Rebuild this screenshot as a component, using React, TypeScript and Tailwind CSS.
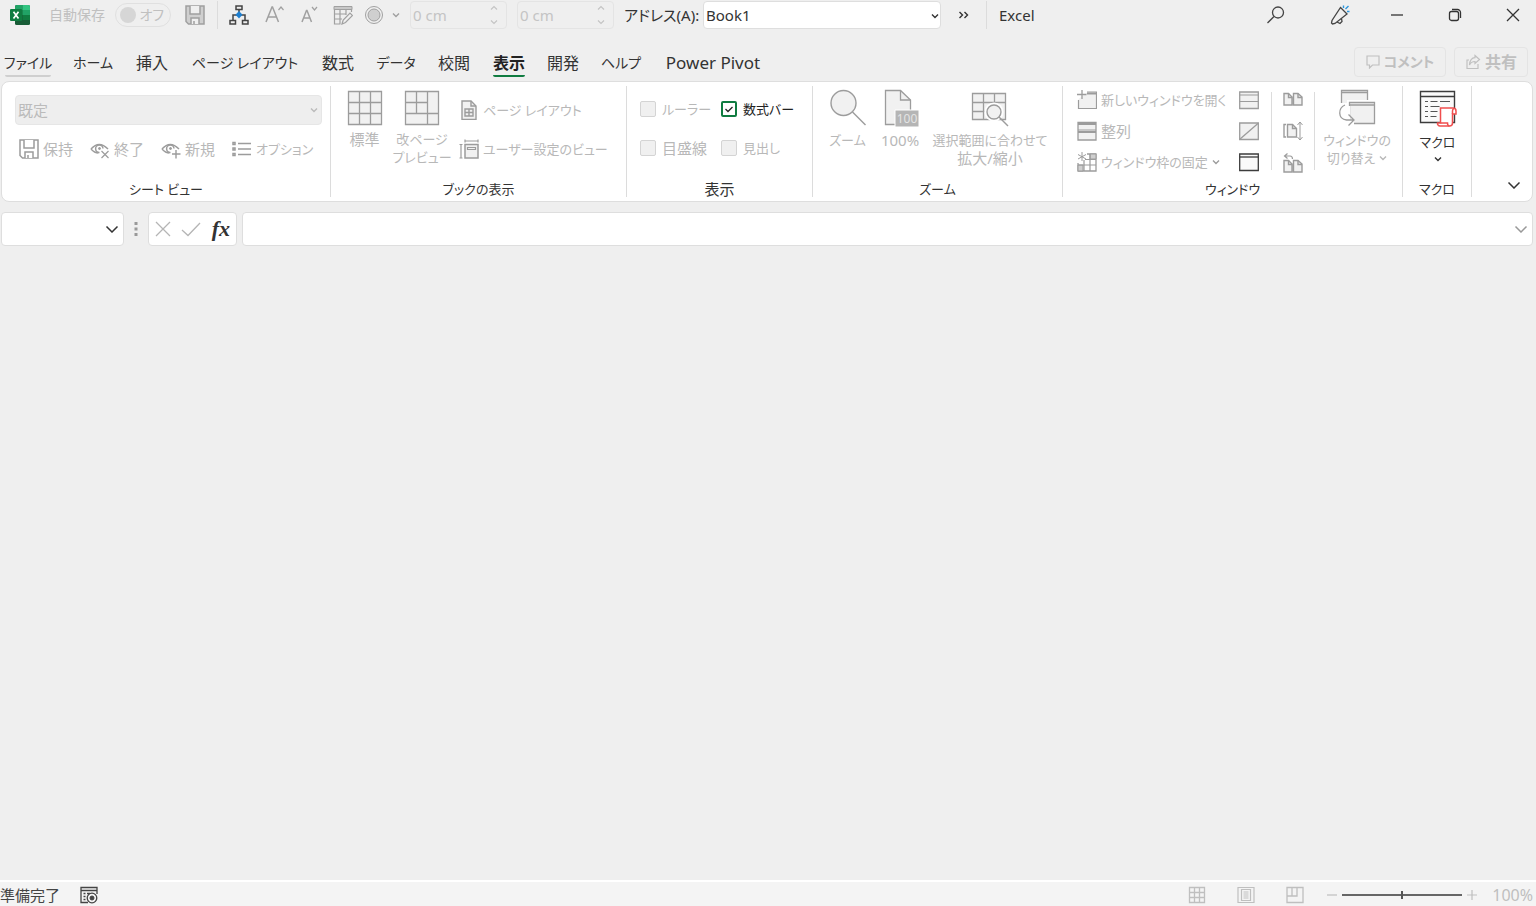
import { useState } from 'react';
import type { ReactNode } from 'react';
import clsx from 'clsx';

const TABS: { label: string; width: string }[] = [
  { label: 'ファイル', width: 'w-[46px]' },
  { label: 'ホーム', width: 'w-[40px]' },
  { label: '挿入', width: 'w-[34px]' },
  { label: 'ページ レイアウト', width: 'w-[108px]' },
  { label: '数式', width: 'w-[34px]' },
  { label: 'データ', width: 'w-[38px]' },
  { label: '校閲', width: 'w-[34px]' },
  { label: '表示', width: 'w-[32px]' },
  { label: '開発', width: 'w-[32px]' },
  { label: 'ヘルプ', width: 'w-[40px]' },
  { label: 'Power Pivot', width: 'w-[100px]' },
];

const hasKana = (label: string) => /[ぁ-ヶー]/.test(label);
const labelSize = (label: string) => (hasKana(label) ? 'text-[13px]' : 'text-[15px]');

function tabSize(label: string) {
  if (hasKana(label)) return 'text-sm';
  return label === 'Power Pivot' ? 'text-[17px]' : 'text-base';
}

// Icons

function Icon({ w = 20, h = 20, className, children }: { w?: number; h?: number; className?: string; children: ReactNode }) {
  return (
    <svg
      width={w}
      height={h}
      viewBox={`0 0 ${w} ${h}`}
      fill="none"
      stroke="currentColor"
      className={clsx('shrink-0', className)}
      aria-hidden="true"
    >
      {children}
    </svg>
  );
}

function Chevron({ className, large }: { className?: string; large?: boolean }) {
  return large ? (
    <Icon w={14} h={8} className={className}>
      <path d="M1.5 1.5 7 7l5.500-5.500" strokeWidth="1.5" />
    </Icon>
  ) : (
    <Icon w={8} h={6} className={className}>
      <path d="M1 1.500 4 4.500l3-3" strokeWidth="1.400" />
    </Icon>
  );
}

function ExcelLogo() {
  return (
    <Icon w={20} h={20}>
      <g stroke="none">
        <rect x="5" y="0" width="15" height="20" rx="1.500" fill="#185c37" />
        <path d="M5 1.500A1.500 1.500 0 0 1 6.500 0H12.500v5H5z" fill="#21a366" />
        <path d="M12.500 0h6A1.500 1.500 0 0 1 20 1.500V5h-7.500z" fill="#33c481" />
        <path d="M5 5h7.500v5H5z" fill="#107c41" />
        <path d="M12.500 5H20v5h-7.500z" fill="#21a366" />
        <path d="M12.500 10H20v5h-7.500z" fill="#107c41" />
        <rect x="0" y="4" width="12" height="12" rx="1" fill="#107c41" />
      </g>
      <path d="m3.500 6.800 5 6.600M8.500 6.800l-5 6.600" stroke="#fff" strokeWidth="1.700" />
    </Icon>
  );
}

function SaveIcon({ filled }: { filled?: boolean }) {
  return (
    <Icon>
      <path d="M1 1h18v18H3.500L1 16.500z" fill={filled ? '#cfcfcf' : 'none'} strokeWidth="1.500" />
      <path d="M5 1v8h10V1M6 19v-6h8v6M9 16v3" fill={filled ? '#efefef' : '#fff'} strokeWidth="1.500" />
    </Icon>
  );
}

function TreeIcon() {
  return (
    <Icon className="text-[#444]">
      <path d="M7 1h6v3.500H7zM1 15.500h5.500V19H1zM13.500 15.500H19V19h-5.500zM10 4.500V7M4 15.500V10h12v5.500" strokeWidth="1.500" />
      <path d="m10 6 3.500 3.700L10 13.400 6.500 9.700z" fill="#1e7fd0" stroke="none" />
    </Icon>
  );
}

function FontSizeIcon({ up }: { up?: boolean }) {
  return up ? (
    <Icon>
      <path d="M1 17 7 2h.500l6 15M3.200 12h8" strokeWidth="1.500" />
      <path d="m13.500 5 2.500-3 2.500 3" strokeWidth="1.200" />
    </Icon>
  ) : (
    <Icon>
      <path d="M3 17 7.500 5.500h.500L12.500 17M4.700 13h6" strokeWidth="1.500" />
      <path d="m13 2 2.500 3L18 2" strokeWidth="1.200" />
    </Icon>
  );
}

function TableEditIcon() {
  return (
    <Icon>
      <path d="M1 1.500h18v3H1z" fill="#c8c8c8" />
      <path d="M1.500 4v15h6M1.500 9H13M1.500 14H9M7 5v14M13 5v5M18.500 4v3" strokeWidth="1.200" />
      <path d="m9 19 1.200-4L17 8l2.500 2.500-7 7z" fill="#efefef" strokeWidth="1.200" />
    </Icon>
  );
}

function RecordIcon() {
  return (
    <Icon>
      <circle cx="10" cy="10" r="8.500" />
      <circle cx="10" cy="10" r="6" fill="#cfcfcf" />
    </Icon>
  );
}

function SearchIcon() {
  return (
    <Icon className="text-[#444]">
      <circle cx="12" cy="7.500" r="5.500" strokeWidth="1.300" />
      <path d="m8 11.500-6.500 6.500" strokeWidth="1.300" />
    </Icon>
  );
}

function MegaphoneIcon() {
  return (
    <Icon className="text-[#444]">
      <path d="M10.500 2.500 17 9 5 18.500l-2.500.500-1-1L2 15.500z" strokeWidth="1.300" />
      <path d="m7 17 3 1.500 2-2-.500-3" strokeWidth="1.300" />
      <path d="M13.500 3V.500M15.500 4l3-3M17 6.500h2.500" stroke="#2b96dd" strokeWidth="1.400" />
    </Icon>
  );
}

function EyeIcon({ mark }: { mark: 'x' | 'plus' }) {
  return (
    <Icon>
      <path d="M1 10q8-9 17 0M1 10q3.500 4 7.500 4" strokeWidth="1.500" />
      <path d="M13 9.500a3.700 3.700 0 1 0-3.500 4" strokeWidth="1.500" />
      <circle cx="9.500" cy="9.500" r="1" fill="currentColor" />
      {mark === 'x' ? (
        <path d="m11.500 12 7 7M18.500 12l-7 7" strokeWidth="1.200" />
      ) : (
        <path d="M15 11v8.500M11 15h8.500" strokeWidth="1.400" />
      )}
    </Icon>
  );
}

function ListIcon() {
  return (
    <Icon>
      <path d="M1 3.500h2v2H1zM1 9h2v2H1zM1 14.500h2v2H1z" strokeWidth="1.500" />
      <path d="M6 4.500h13M6 10h13M6 15.500h13" strokeWidth="1.400" />
    </Icon>
  );
}

function NormalViewIcon() {
  return (
    <Icon w={36} h={36}>
      <path d="M1.500 1.500h33v33h-33z" fill="#f1f1f1" strokeWidth="1.300" />
      <path d="M1.500 12.500h33M1.500 23.500h33M12.500 1.500v33M23.500 1.500v33" strokeWidth="1.300" />
    </Icon>
  );
}

function PageBreakIcon() {
  return (
    <Icon w={36} h={36}>
      <path d="M1.500 1.500h33v33h-33z" fill="#f1f1f1" strokeWidth="1.300" />
      <path d="M1.500 12.500h22M1.500 23.500h33M12.500 1.500v22M23.500 1.500v33" strokeWidth="1.300" />
    </Icon>
  );
}

function PageLayoutIcon() {
  return (
    <Icon>
      <path d="M3 1h9l5 5v13.500H3z" fill="#f1f1f1" strokeWidth="1.400" />
      <path d="M12 1v5h5M6 9h8v7H6zM10 9v7M6 12.500h8" strokeWidth="1.400" />
    </Icon>
  );
}

function CustomViewIcon() {
  return (
    <Icon>
      <path d="M6 5.500h13v13.500H6z" fill="#f1f1f1" strokeWidth="1.500" />
      <path d="M8.500 8.500h8v2h-8zM6 2h13M6 .500v3M19 .500v3M2 5.500V19M.500 5.500h3M.500 19h3" strokeWidth="1.200" />
    </Icon>
  );
}

function ZoomIcon() {
  return (
    <Icon w={38} h={38}>
      <circle cx="14.500" cy="14" r="12.500" fill="#f1f1f1" strokeWidth="1.400" />
      <path d="m23.500 23 13 13" strokeWidth="1.400" />
    </Icon>
  );
}

function Zoom100Icon() {
  return (
    <Icon w={38} h={38}>
      <path d="M4.500 1.500h15l10 9.500v24.500h-25z" fill="#f1f1f1" strokeWidth="1.300" />
      <path d="M19.500 1.500V11h10" strokeWidth="1.300" />
      <path d="M14 21h24v17H14z" fill="#b5b5b5" stroke="#fff" />
      <text x="26" y="34" textAnchor="middle" fontSize="12" fill="#e4e4e4" stroke="none">
        100
      </text>
    </Icon>
  );
}

function ZoomSelectionIcon() {
  return (
    <Icon w={38} h={38}>
      <path d="M1.500 4.500h33v26h-33z" fill="#f1f1f1" strokeWidth="1.300" />
      <path d="M1.500 13.500h33M1.500 22.500h12M12.500 4.500v26M23.500 4.500v9" strokeWidth="1.300" />
      <circle cx="23" cy="23" r="9.500" fill="#fff" stroke="none" />
      <circle cx="23" cy="23" r="7" fill="#f1f1f1" strokeWidth="1.400" />
      <path d="m28 28 9 9" strokeWidth="1.400" />
    </Icon>
  );
}

function NewWindowIcon() {
  return (
    <Icon>
      <path d="M10 2.500h9.500v16h-18V9" fill="#f1f1f1" stroke="none" />
      <path d="M10 2h9.500v16.500h-18V10" strokeWidth="1.200" />
      <path d="M10 3.500h9.500" strokeWidth="2" />
      <path d="M5 0v9M0 4.500h9.500" strokeWidth="1.300" />
    </Icon>
  );
}

function ArrangeIcon() {
  return (
    <Icon>
      <path d="M1 1.500h18v17.500H1z" fill="#f1f1f1" strokeWidth="1.300" />
      <path d="M1 3h18M1 11h18" strokeWidth="2" />
      <path d="M1 9h18" />
    </Icon>
  );
}

function FreezeIcon() {
  return (
    <Icon>
      <path d="M10 2h9v17H1v-8" strokeWidth="1.300" />
      <path d="M13 2h6v5h-6zM1 13h5v6H1z" fill="#cfcfcf" />
      <path d="M7 8v11M13 2v17M1 13h18M8 7.500h11" strokeWidth="1.200" />
      <path d="M5 0v9M1 2.500l8 4.500M9 2.500 1 7" />
    </Icon>
  );
}

function SplitIcon() {
  return (
    <Icon>
      <path d="M.700 2h18.600v16.500H.700z" fill="#f1f1f1" strokeWidth="1.300" />
      <path d="M.500 5h19M.500 11.500h19" strokeWidth="1.200" />
    </Icon>
  );
}

function HideIcon() {
  return (
    <Icon>
      <path d="M.700 2h18.600v16.500H.700z" fill="#f1f1f1" strokeWidth="1.300" />
      <path d="m.500 18.500 19-16.500" strokeWidth="1.300" />
    </Icon>
  );
}

function WindowIcon() {
  return (
    <Icon className="text-[#3c3c3c]">
      <path d="M.700 2h18.600v16.500H.700z" fill="#fafafa" strokeWidth="1.300" />
      <path d="M.500 5h19" strokeWidth="1.300" />
    </Icon>
  );
}

function SideBySideIcon({ reset }: { reset?: boolean }) {
  const top = reset ? 7.5 : 4.5;
  return (
    <Icon>
      <g transform={`translate(0 ${top})`} strokeWidth="1.400">
        <path d="M1 0h4.500l3.500 3.500V11.500H1zM10.500 0h4.500L19 3.500v8h-8.500z" fill="#f1f1f1" />
        <path d="M5.500 0v4H9M15 0v4h4" />
      </g>
      {reset && <path d="M4.500.500 1.500 3l3 2.500M1.500 3H7q2.500 0 2.500 3" strokeWidth="1.200" />}
    </Icon>
  );
}

function SyncScrollIcon() {
  return (
    <Icon>
      <path d="M4.500 3.500h5l4 4V16h-9z" fill="#f1f1f1" strokeWidth="1.400" />
      <path d="M3 3.500H1V16h2M9.500 3.500v4h4" strokeWidth="1.400" />
      <path d="M17 1v18M14.500 4 17 1l2.500 3M14.500 16l2.500 3 2.500-3" />
    </Icon>
  );
}

function SwitchWindowIcon() {
  return (
    <Icon w={38} h={38}>
      <path d="M3.500 14V1.500h26V14" fill="#f1f1f1" strokeWidth="1.300" />
      <path d="M3.500 3.500h26" strokeWidth="1.500" />
      <path d="M9 11h28.500v25H9z" fill="#fff" stroke="none" />
      <path d="M11.500 13.500h25v21h-25z" fill="#f1f1f1" strokeWidth="1.300" />
      <path d="M11.500 16h25" strokeWidth="1.500" />
      <path d="M8 17v18h8" stroke="#fff" strokeWidth="8" />
      <path d="M7 16c-7 3-7.500 14 1.500 15h7M10.500 25.500l5.500 5.500-5.500 5.500" strokeWidth="1.300" />
    </Icon>
  );
}

function MacroIcon() {
  return (
    <Icon w={38} h={38} className="text-[#3c3c3c]">
      <path d="M1.500 1.500h34v31h-34z" fill="#fafafa" strokeWidth="1.400" />
      <path d="M1.500 6.500h34" strokeWidth="1.500" />
      <path d="M6 11.500h3M11.500 11.500h7M21 11.500h10M6 16.500h3M11.500 16.500h9M6 21.500h3M11.500 21.500h7M6 26.500h3M11.500 26.500h6" stroke="#555" />
      <path d="M21.500 18h12.500a3 3 0 0 1 3 3v3h-3.500v9a3 3 0 0 1-3 3H21a2.500 2.500 0 0 1-2.500-3h3z" fill="#fff" stroke="#f04e4e" strokeWidth="1.500" />
      <path d="M21.500 33h7q0 3 2 3M33.500 24v-3q0-2 1.500-2.500" stroke="#f04e4e" strokeWidth="1.500" />
    </Icon>
  );
}

// Shared controls

function CommandButton({ icon, label, enabled, menu }: { icon: ReactNode; label: string; enabled?: boolean; menu?: boolean }) {
  return (
    <button
      type="button"
      disabled={!enabled}
      className="flex h-6 items-center gap-1 whitespace-nowrap text-[#9c9c9c] enabled:text-[#333]"
    >
      {icon}
      <span className={clsx(labelSize(label), !enabled && 'text-[#b8b8b8]')}>{label}</span>
      {menu && <Chevron />}
    </button>
  );
}

function LargeButton({ icon, lines, className, menu }: { icon: ReactNode; lines: string[]; className?: string; menu?: boolean }) {
  return (
    <button type="button" disabled className={clsx('flex flex-col items-center text-[#9c9c9c]', className)}>
      {icon}
      <span className="mt-1 flex flex-col whitespace-nowrap text-[#b8b8b8]">
        {lines.map((line, i) => (
          <span key={line} className={clsx('flex items-center justify-center gap-1 leading-[18px]', labelSize(line))}>
            {line}
            {menu && i === lines.length - 1 && <Chevron />}
          </span>
        ))}
      </span>
    </button>
  );
}

function IconButton({ label, children, enabled }: { label: string; children: ReactNode; enabled?: boolean }) {
  return (
    <button type="button" aria-label={label} disabled={!enabled} className="flex h-6 items-center text-[#9c9c9c]">
      {children}
    </button>
  );
}

function RibbonGroup({ title, className, children }: { title: string; className: string; children: ReactNode }) {
  return (
    <section aria-label={title} className={clsx('flex shrink-0 flex-col border-r border-[#dcdcdc]', className)}>
      <div className="h-24">{children}</div>
      <h2 className={clsx('text-center leading-4 text-[#333]', labelSize(title))}>{title}</h2>
    </section>
  );
}

function CheckOption({ label, enabled, checked, onChange }: { label: string; enabled?: boolean; checked?: boolean; onChange?: () => void }) {
  return (
    <label
      className={clsx(
        'flex h-6 items-center gap-1.5 whitespace-nowrap',
        labelSize(label),
        enabled ? 'text-[#222]' : 'text-[#b8b8b8]'
      )}
    >
      <span className="relative flex">
        <input
          type="checkbox"
          disabled={!enabled}
          checked={!!checked}
          onChange={() => onChange?.()}
          className="size-4 appearance-none rounded-xs border border-[#d4d4d4] bg-[#f0f0f0] enabled:border-2 enabled:border-[#107c41] enabled:bg-white"
        />
        {checked && (
          <Icon w={16} h={16} className="pointer-events-none absolute inset-0 text-[#222]">
            <path d="m4.500 8 2.500 2.500L11.500 6" strokeWidth="1.300" />
          </Icon>
        )}
      </span>
      {label}
    </label>
  );
}

function SizeSpinner({ label }: { label: string }) {
  return (
    <div className="flex h-7 w-[97px] items-center justify-between rounded border border-[#e4e4e4] pr-2 pl-0.5 text-[#c4c4c4]">
      <input aria-label={label} disabled defaultValue="0 cm" className="w-16 bg-transparent" />
      <Icon w={8} h={20}>
        <path d="m1 4.500 3-3 3 3M1 15.500l3 3 3-3" strokeWidth="1.200" />
      </Icon>
    </div>
  );
}

function TitleBar() {
  return (
    <header className="flex h-[30px] items-center text-[#a0a0a0]">
      <div className="ml-2.5">
        <ExcelLogo />
      </div>
      <label className="ml-[19px] flex items-center gap-2.5 whitespace-nowrap text-sm text-[#c0c0c0]">
        自動保存
        <span className="relative flex h-6 w-14 items-center justify-between rounded-full border border-[#e0e0e0] pr-1.5 pl-1">
          <input type="checkbox" disabled className="size-4 appearance-none rounded-full bg-[#d6d6d6]" />
          オフ
        </span>
      </label>
      <button type="button" aria-label="上書き保存" disabled className="ml-3.5">
        <SaveIcon filled />
      </button>
      <div className="ml-3 h-7 w-px bg-[#dcdcdc]" />
      <button type="button" aria-label="組織図" className="ml-[11px]">
        <TreeIcon />
      </button>
      <button type="button" aria-label="フォント サイズの拡大" disabled className="ml-4">
        <FontSizeIcon up />
      </button>
      <button type="button" aria-label="フォント サイズの縮小" disabled className="ml-3.5">
        <FontSizeIcon />
      </button>
      <button type="button" aria-label="表の編集" disabled className="ml-3.5">
        <TableEditIcon />
      </button>
      <button type="button" aria-label="記録" disabled className="ml-[11px] flex items-center gap-2">
        <RecordIcon />
        <Chevron />
      </button>
      <div className="ml-2.5 flex gap-2.5">
        <SizeSpinner label="高さ" />
        <SizeSpinner label="幅" />
      </div>
      <label htmlFor="address" className="ml-2.5 w-[79px] whitespace-nowrap text-[#333]">
        アドレス(A):
      </label>
      <div className="relative flex text-[#333]">
        <select
          id="address"
          className="h-7 w-[238px] appearance-none rounded border border-[#dedede] bg-white pl-0.5"
        >
          <option>Book1</option>
        </select>
        <Chevron className="pointer-events-none absolute top-3 right-0.5" />
      </div>
      <button type="button" aria-label="その他のコマンド" className="ml-[17px] text-[#333]">
        <Icon w={12} h={10}>
          <path d="m1.500 2 3 3-3 3M6.500 2l3 3-3 3" strokeWidth="1.400" />
        </Icon>
      </button>
      <div className="ml-4 h-7 w-px bg-[#dcdcdc]" />
      <span className="ml-3 text-[#333]">Excel</span>
      <div className="mr-4 ml-auto flex items-center text-[#333]">
        <button type="button" aria-label="検索">
          <SearchIcon />
        </button>
        <button type="button" aria-label="新機能" className="ml-11">
          <MegaphoneIcon />
        </button>
        <button type="button" aria-label="最小化" className="ml-10">
          <Icon w={14} h={14}>
            <path d="M1 7h12" strokeWidth="1.300" />
          </Icon>
        </button>
        <button type="button" aria-label="元に戻す" className="ml-11">
          <Icon w={14} h={14}>
            <rect x="1.500" y="3.500" width="9" height="9" rx="2" strokeWidth="1.300" />
            <path d="M4 1.500h5.500a3 3 0 0 1 3 3V10" strokeWidth="1.300" />
          </Icon>
        </button>
        <button type="button" aria-label="閉じる" className="ml-11">
          <Icon w={14} h={14}>
            <path d="m1 1 12 12M13 1 1 13" strokeWidth="1.300" />
          </Icon>
        </button>
      </div>
    </header>
  );
}

function TabBar() {
  const [activeTab, setActiveTab] = useState('表示');

  return (
    <nav className="mt-4 flex h-[35px] items-start pr-2 pl-[5px]">
      <div role="tablist" className="flex gap-[22px]">
        {TABS.map((tab) => {
          const isActive = activeTab === tab.label;
          return (
            <button
              key={tab.label}
              type="button"
              role="tab"
              aria-selected={isActive}
              onClick={() => setActiveTab(tab.label)}
              className={clsx(
                'flex h-[31px] items-center justify-center rounded-xs border-b-2 pt-1 leading-5 whitespace-nowrap',
                tab.width,
                tabSize(tab.label),
                isActive && 'border-[#107c41] font-bold text-[#222]',
                !isActive && 'text-[#333]',
                !isActive && (tab.label === 'ファイル' ? 'border-[#cfcfcf]' : 'border-transparent')
              )}
            >
              {tab.label}
            </button>
          );
        })}
      </div>
      <div className="mt-px ml-auto flex gap-2 font-bold text-[#c0c0c0]">
        <button type="button" disabled className="flex h-[30px] w-[92px] items-center justify-center gap-1 rounded border border-[#e4e4e4] text-sm whitespace-nowrap">
          <Icon w={14} h={14}>
            <path d="M1 1h12v9H6.500l-3 3v-3H1z" strokeWidth="1.200" />
          </Icon>
          コメント
        </button>
        <button type="button" disabled className="flex h-[30px] w-[74px] items-center justify-center gap-1 rounded border border-[#e4e4e4] text-base whitespace-nowrap">
          <Icon w={16} h={16}>
            <path d="M4 6H2v8.500h11V10M10 1.500l4.500 4L10 9.500V7.500Q6 7.500 4.500 11 5 4 10 3.700z" strokeWidth="1.200" />
          </Icon>
          共有
        </button>
      </div>
    </nav>
  );
}

function Ribbon() {
  const [formulaBar, setFormulaBar] = useState(true);

  return (
    <div className="mr-[3px] ml-px flex h-[121px] rounded-lg border border-[#dedede] bg-white py-1">
      <RibbonGroup title="シート ビュー" className="w-[329px]">
        <div className="flex flex-col gap-3 pt-[9px] pr-2 pl-[13px]">
          <div className="relative flex text-[#bbb]">
            <select
              aria-label="シート ビュー"
              disabled
              className="h-[30px] w-full appearance-none rounded border border-[#e6e6e6] bg-[#eee] pl-0.5 opacity-100"
            >
              <option>既定</option>
            </select>
            <Chevron className="pointer-events-none absolute top-3 right-1" />
          </div>
          <div className="flex gap-[17px] pl-1">
            <CommandButton icon={<SaveIcon />} label="保持" />
            <CommandButton icon={<EyeIcon mark="x" />} label="終了" />
            <CommandButton icon={<EyeIcon mark="plus" />} label="新規" />
            <CommandButton icon={<ListIcon />} label="オプション" />
          </div>
        </div>
      </RibbonGroup>

      <RibbonGroup title="ブックの表示" className="w-[296px]">
        <div className="flex pt-1 pl-[5px]">
          <LargeButton icon={<NormalViewIcon />} lines={['標準']} className="w-[57px]" />
          <LargeButton icon={<PageBreakIcon />} lines={['改ページ', 'プレビュー']} className="w-[58px]" />
          <div className="ml-2 flex flex-col gap-[15px] pt-2">
            <CommandButton icon={<PageLayoutIcon />} label="ページ レイアウト" />
            <CommandButton icon={<CustomViewIcon />} label="ユーザー設定のビュー" />
          </div>
        </div>
      </RibbonGroup>

      <RibbonGroup title="表示" className="w-[186px]">
        <div className="grid grid-cols-[81px_1fr] gap-y-[15px] pt-[11px] pl-[13px]">
          <CheckOption label="ルーラー" />
          <CheckOption label="数式バー" enabled checked={formulaBar} onChange={() => setFormulaBar(!formulaBar)} />
          <CheckOption label="目盛線" />
          <CheckOption label="見出し" />
        </div>
      </RibbonGroup>

      <RibbonGroup title="ズーム" className="w-[250px]">
        <div className="flex pt-[3px] pl-2">
          <LargeButton icon={<ZoomIcon />} lines={['ズーム']} className="w-[53px]" />
          <LargeButton icon={<Zoom100Icon />} lines={['100%']} className="w-[52px]" />
          <LargeButton icon={<ZoomSelectionIcon />} lines={['選択範囲に合わせて', '拡大/縮小']} className="w-[128px]" />
        </div>
      </RibbonGroup>

      <RibbonGroup title="ウィンドウ" className="w-[340px]">
        <div className="flex pt-0.5 pl-3.5">
          <div className="flex w-[162px] flex-col gap-[7px]">
            <CommandButton icon={<NewWindowIcon />} label="新しいウィンドウを開く" />
            <CommandButton icon={<ArrangeIcon />} label="整列" />
            <CommandButton icon={<FreezeIcon />} label="ウィンドウ枠の固定" menu />
          </div>
          <div className="flex flex-col gap-[7px]">
            <IconButton label="分割">
              <SplitIcon />
            </IconButton>
            <IconButton label="表示しない">
              <HideIcon />
            </IconButton>
            <IconButton label="再表示" enabled>
              <WindowIcon />
            </IconButton>
          </div>
          <div className="mt-1 ml-3 flex h-[78px] items-center border-x border-[#dcdcdc] px-[11px]">
            <div className="flex flex-col gap-2">
              <IconButton label="並べて比較">
                <SideBySideIcon />
              </IconButton>
              <IconButton label="同時にスクロール">
                <SyncScrollIcon />
              </IconButton>
              <IconButton label="ウィンドウの位置を元に戻す">
                <SideBySideIcon reset />
              </IconButton>
            </div>
          </div>
          <LargeButton
            icon={<SwitchWindowIcon />}
            lines={['ウィンドウの', '切り替え']}
            menu
            className="w-[84px] pt-px"
          />
        </div>
      </RibbonGroup>

      <RibbonGroup title="マクロ" className="w-[69px]">
        <button type="button" className="flex w-full flex-col items-center pt-1 pl-px text-[#333]">
          <MacroIcon />
          <span className="mt-1 text-[13px]">マクロ</span>
          <Chevron className="mt-1" />
        </button>
      </RibbonGroup>

      <button type="button" aria-label="リボンを折りたたむ" className="mt-auto mr-2.5 mb-[7px] ml-auto p-px text-[#333]">
        <Chevron large />
      </button>
    </div>
  );
}

function FormulaBar() {
  return (
    <div className="mt-2.5 mr-[3px] ml-px flex h-[34px] items-center">
      <div className="flex h-full w-[123px] items-center rounded border border-[#dedede] bg-white pr-1 text-[#333]">
        <input aria-label="名前ボックス" className="min-w-0 flex-1 bg-transparent px-1 outline-none" />
        <button type="button" aria-label="名前の一覧">
          <Chevron large />
        </button>
      </div>
      <Icon w={4} h={16} className="mx-2.5 text-[#999]">
        <path d="M2 1v3M2 6.500v3M2 12v3" strokeWidth="3" />
      </Icon>
      <div className="flex h-full w-[89px] items-center justify-between rounded border border-[#dedede] bg-white px-1.5 text-[#b5b5b5]">
        <button type="button" aria-label="キャンセル" disabled>
          <Icon w={16} h={16}>
            <path d="m1 1 14 14M15 1 1 15" strokeWidth="1.300" />
          </Icon>
        </button>
        <button type="button" aria-label="入力" disabled>
          <Icon w={20} h={16}>
            <path d="m1 9 6 5.500L19 2" strokeWidth="1.300" />
          </Icon>
        </button>
        <button type="button" aria-label="関数の挿入" className="font-['Liberation_Serif',serif] text-[22px] leading-6 font-bold text-[#333] italic">
          fx
        </button>
      </div>
      <div className="ml-[5px] flex h-full min-w-0 flex-1 items-center rounded border border-[#dedede] bg-white pr-1 text-[#999]">
        <input aria-label="数式バー" className="min-w-0 flex-1 bg-transparent px-2 text-[#222] outline-none" />
        <button type="button" aria-label="数式バーの展開">
          <Chevron large />
        </button>
      </div>
    </div>
  );
}

function StatusBar() {
  return (
    <footer className="flex h-[26px] items-center border-t-2 border-white bg-[#f4f4f4] pt-px pr-[3px] text-[#bfbfbf]">
      <span className="text-[#444]">準備完了</span>
      <button type="button" aria-label="マクロの記録" className="ml-5 text-[#444]">
        <Icon w={18} h={18}>
          <path d="M8 16.500H1v-15h16V8M1 4.500h16M3.500 7.500h2M7 7.500h3M3.500 10.500h2M3.500 13.500h2" strokeWidth="1.300" />
          <circle cx="12" cy="12" r="4.800" fill="#f4f4f4" strokeWidth="1.300" />
          <circle cx="12" cy="12" r="2" fill="currentColor" />
        </Icon>
      </button>
      <div className="ml-auto flex items-center gap-[31px]">
        <button type="button" aria-label="標準" disabled>
          <Icon w={18} h={18}>
            <path d="M1.500 1.500h15v15h-15zM1.500 6.500h15M1.500 11.500h15M6.500 1.500v15M11.500 1.500v15" strokeWidth="1.300" />
          </Icon>
        </button>
        <button type="button" aria-label="ページ レイアウト" disabled>
          <Icon w={18} h={18}>
            <path d="M1 1.500h16v15H1zM4.500 3.500h9v11h-9zM6.500 6h5M6.500 8h5M6.500 10h5M6.500 12h5" strokeWidth="1.200" />
          </Icon>
        </button>
        <button type="button" aria-label="改ページ プレビュー" disabled>
          <Icon w={18} h={18}>
            <path d="M1 1.500h16v15H1zM1 10h10V1.500M6 1.500V10" strokeWidth="1.300" />
          </Icon>
        </button>
      </div>
      <button type="button" aria-label="縮小" disabled className="ml-[22px]">
        <Icon w={12} h={12}>
          <path d="M1 6h10" strokeWidth="1.200" />
        </Icon>
      </button>
      <input
        type="range"
        aria-label="ズーム"
        min={0}
        max={200}
        defaultValue={100}
        className="mx-1 w-[120px] appearance-none bg-transparent [&::-webkit-slider-runnable-track]:h-0.5 [&::-webkit-slider-runnable-track]:bg-[#666] [&::-webkit-slider-thumb]:-mt-[3px] [&::-webkit-slider-thumb]:h-2 [&::-webkit-slider-thumb]:w-0.5 [&::-webkit-slider-thumb]:appearance-none [&::-webkit-slider-thumb]:bg-[#555]"
      />
      <button type="button" aria-label="拡大" disabled>
        <Icon w={12} h={12}>
          <path d="M1 6h10M6 1v10" strokeWidth="1.200" />
        </Icon>
      </button>
      <span className="ml-3.5 text-base">100%</span>
    </footer>
  );
}

export default function App() {
  return (
    <div className="flex min-h-screen flex-col bg-[#efefef] font-['Noto_Sans','Noto_Sans_CJK_JP',sans-serif] text-[15px] leading-5 [font-feature-settings:'palt']">
      <TitleBar />
      <TabBar />
      <Ribbon />
      <FormulaBar />
      <main className="flex-1" />
      <StatusBar />
    </div>
  );
}
